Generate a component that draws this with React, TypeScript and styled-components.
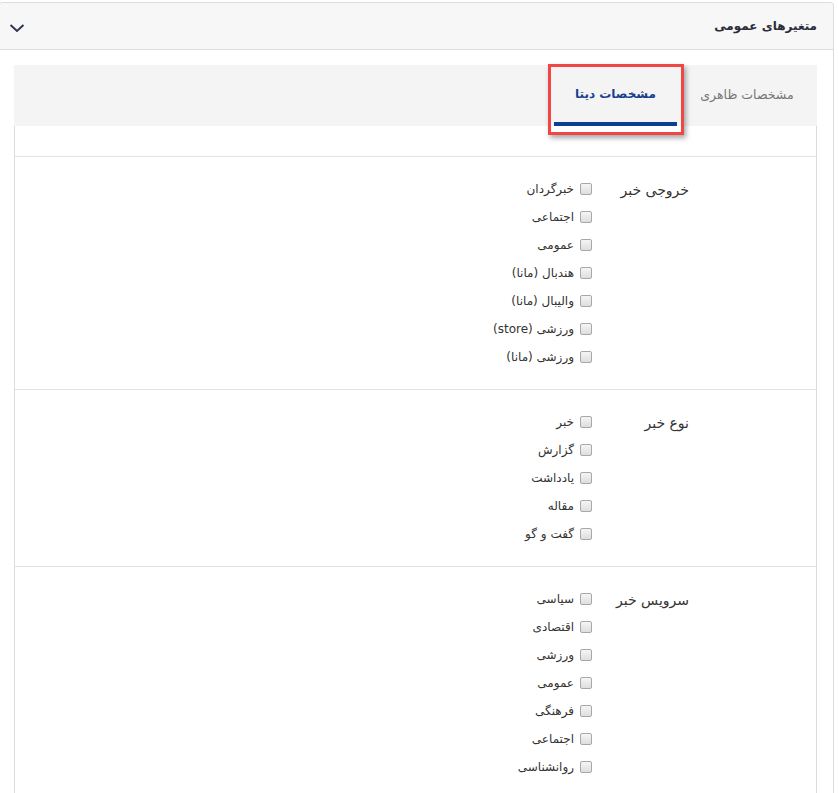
import React from 'react';
import styled, { createGlobalStyle } from 'styled-components';

interface Group {
    title: string;
    items: string[];
}

const groups: Group[] = [
    {
        title: 'خروجی خبر',
        items: ['خبرگردان', 'اجتماعی', 'عمومی', 'هندبال (مانا)', 'والیبال (مانا)', 'ورزشی (store)', 'ورزشی (مانا)'],
    },
    {
        title: 'نوع خبر',
        items: ['خبر', 'گزارش', 'یادداشت', 'مقاله', 'گفت و گو'],
    },
    {
        title: 'سرویس خبر',
        items: ['سیاسی', 'اقتصادی', 'ورزشی', 'عمومی', 'فرهنگی', 'اجتماعی', 'روانشناسی'],
    },
];

const App: React.FC = () => {
    return (
        <>
            <GlobalStyle />
            <Panel>
                <PanelHeader>
                    <PanelTitle>متغیرهای عمومی</PanelTitle>
                    <svg width="16" height="10" viewBox="0 0 16 10">
                        <polyline points="1.5,2 8,8 14.5,2" fill="none" stroke="#2e3558" strokeWidth="2" />
                    </svg>
                </PanelHeader>
                <PanelBody>
                    <TabBar>
                        <Tab>مشخصات ظاهری</Tab>
                        <Tab $active>
                            مشخصات دیتا
                            <Highlight />
                        </Tab>
                    </TabBar>
                    <Content>
                        <Spacer />
                        {groups.map((g) => (
                            <Section key={g.title}>
                                <GroupLabel>{g.title}</GroupLabel>
                                <List>
                                    {g.items.map((item) => (
                                        <Option key={item}>
                                            <Box type="checkbox" />
                                            <span>{item}</span>
                                        </Option>
                                    ))}
                                </List>
                            </Section>
                        ))}
                    </Content>
                </PanelBody>
            </Panel>
        </>
    );
};

export default App;

// Styled-components

const GlobalStyle = createGlobalStyle`
    body {
        margin: 0;
        background: #fff;
        font-family: Tahoma, "DejaVu Sans", sans-serif;
        color: #333;
    }
`;

const Panel = styled.div`
    margin: 2px 4px 0 -1px;
    border: 1px solid #dcdcdc;
    border-bottom: none;
    border-radius: 4px 4px 0 0;
    height: 791px;
    overflow: hidden;
`;

const PanelHeader = styled.div`
    direction: rtl;
    display: flex;
    align-items: center;
    justify-content: space-between;
    height: 46px;
    padding: 0 16px 0 9px;
    background: #f7f7f7;
    border-bottom: 1px solid #dcdcdc;

    svg {
        margin-top: 3px;
    }
`;

const PanelTitle = styled.div`
    font-size: 12px;
    font-weight: bold;
    color: #2b2d3a;
`;

const PanelBody = styled.div`
    padding: 15px 16px 0 14px;
`;

const TabBar = styled.div`
    direction: rtl;
    display: flex;
    height: 61px;
    background: #f4f4f4;
`;

const Tab = styled.div<{ $active?: boolean }>`
    position: relative;
    display: flex;
    align-items: center;
    justify-content: center;
    box-sizing: border-box;
    width: ${(p) => (p.$active ? '123px' : '140px')};
    padding-top: ${(p) => (p.$active ? '0' : '2px')};
    font-size: ${(p) => (p.$active ? '12px' : '12.5px')};
    font-weight: ${(p) => (p.$active ? 'bold' : 'normal')};
    color: ${(p) => (p.$active ? '#17408f' : '#777')};
    border-bottom: 4px solid ${(p) => (p.$active ? '#0b3f94' : 'transparent')};
`;

const Highlight = styled.span`
    position: absolute;
    top: -1px;
    left: -6px;
    right: -7px;
    bottom: -13px;
    border: 3px solid #f04646;
    box-shadow: 2px 3px 5px rgba(0, 0, 0, 0.35);
    pointer-events: none;
`;

const Content = styled.div`
    direction: rtl;
    border-left: 1px solid #dcdcdc;
    border-right: 1px solid #dcdcdc;
`;

const Spacer = styled.div`
    height: 30px;
    border-bottom: 1px solid #e3e3e3;
`;

const Section = styled.div`
    display: flex;
    padding: 18px 127px 18px 0;
    border-bottom: 1px solid #e3e3e3;
`;

const GroupLabel = styled.div`
    width: 97px;
    flex-shrink: 0;
    font-size: 14px;
    line-height: 28px;
    padding-top: 1px;
`;

const List = styled.div`
    display: flex;
    flex-direction: column;
`;

const Option = styled.label`
    display: flex;
    align-items: center;
    gap: 6px;
    height: 28px;
    font-size: 12px;
    color: #333;
`;

const Box = styled.input`
    appearance: none;
    margin: 0;
    width: 12px;
    height: 12px;
    border: 1px solid #a8a8a8;
    border-radius: 2px;
    background: linear-gradient(#f5f5f5, #dedede);
`;
